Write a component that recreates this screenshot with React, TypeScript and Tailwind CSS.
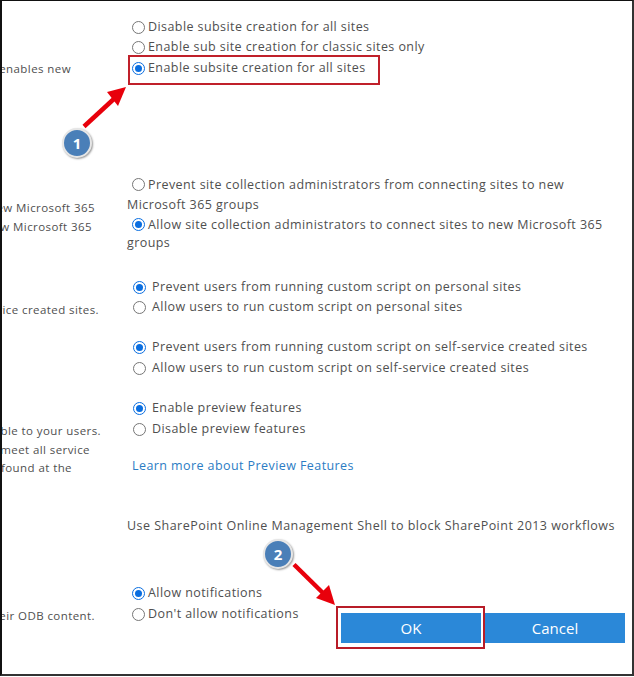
const Radio = ({ on }: { on?: boolean }) => (
  <span className={`inline-block shrink-0 w-[13px] h-[13px] rounded-full border bg-white ${on ? "border-[#0a6ee0] p-[2px]" : "border-[#767676]"}`}>
    {on && <span className="block w-full h-full rounded-full bg-[#0a6ee0]" />}
  </span>
);

const Opt = ({ on, children, wide, h = "h-5" }: { on?: boolean; children: React.ReactNode; wide?: boolean; h?: string }) => (
  <div className={`flex items-center ${h} ${wide ? "pl-[6px] gap-[6px]" : "pl-[5px] gap-[3px]"} whitespace-nowrap`}>
    <Radio on={on} />
    <span>{children}</span>
  </div>
);

const Clip = ({ w, h = "h-[19px]", children }: { w: string; h?: string; children: React.ReactNode }) => (
  <div className={`${w} ${h} leading-[19px] overflow-hidden flex justify-end whitespace-nowrap`}>
    <span className="shrink-0">{children}</span>
  </div>
);

export default function App() {
  return (
    <div className="relative w-[634px] h-[677px] bg-white overflow-hidden text-[#4f4f4f] text-[12.5px] tracking-[0.42px] font-['Open_Sans','Noto_Sans',sans-serif]">
      <div className="w-[634px] h-[676px] border-t border-l-2 border-r-2 border-b-2 border-t-[#111] border-l-[#111] border-r-[#333] border-b-[#333] pt-[16px]">
        {/* Section 1 */}
        <div className="flex h-[157px]">
          <div className="w-[125px] shrink-0 pt-[42px] text-[11.5px]">
            <Clip w="w-[69px]">which enables new</Clip>
          </div>
          <div>
            <Opt>Disable subsite creation for all sites</Opt>
            <Opt h="h-[21px]">Enable sub site creation for classic sites only</Opt>
            <Opt on h="h-[21px]">Enable subsite creation for all sites</Opt>
          </div>
        </div>

        {/* Section 2 */}
        <div className="flex h-[93px]">
          <div className="w-[125px] shrink-0 pt-[24px] text-[11.5px]">
            <Clip w="w-[93px]">to new Microsoft 365</Clip>
            <Clip w="w-[90px]">to new Microsoft 365</Clip>
          </div>
          <div className="w-[490px] leading-[19px]">
            <Opt>Prevent site collection administrators from connecting sites to new</Opt>
            <div className="h-5 leading-[21px]">Microsoft 365 groups</div>
            <Opt on>Allow site collection administrators to connect sites to new Microsoft 365</Opt>
            <div className="h-5 leading-[18px]">groups</div>
          </div>
        </div>

        {/* Section 3 */}
        <div className="flex h-[60px] pt-[10px]">
          <div className="w-[125px] shrink-0 pt-[23px] text-[11.5px]">
            <Clip w="w-[97px]">self-service created sites.</Clip>
          </div>
          <div>
            <Opt wide on>Prevent users from running custom script on personal sites</Opt>
            <Opt wide>Allow users to run custom script on personal sites</Opt>
          </div>
        </div>

        {/* Section 4 */}
        <div className="flex h-[61px] pl-[125px] pt-[10px]">
          <div>
            <Opt wide on h="h-[21px]">Prevent users from running custom script on self-service created sites</Opt>
            <Opt wide>Allow users to run custom script on self-service created sites</Opt>
          </div>
        </div>

        {/* Section 5 */}
        <div className="flex h-[90px] pt-[10px]">
          <div className="w-[125px] shrink-0 pt-[23px] text-[11.5px]">
            <Clip w="w-[99px]">available to your users.</Clip>
            <Clip w="w-[88px]" h="h-[18px]">may not meet all service</Clip>
            <Clip w="w-[70px]">can be found at the</Clip>
          </div>
          <div>
            <Opt wide on h="h-[21px]">Enable preview features</Opt>
            <Opt wide>Disable preview features</Opt>
            <a className="block mt-[18px] ml-[5px] text-[#2b7cc4]">Learn more about Preview Features</a>
          </div>
        </div>

        {/* Section 6 */}
        <div className="pl-[125px] pt-[38px] h-[105px] leading-5 tracking-[0.47px]">Use SharePoint Online Management Shell to block SharePoint 2013 workflows</div>

        {/* Section 7 */}
        <div className="flex">
          <div className="w-[125px] shrink-0 pt-[23px] text-[11.5px]">
            <Clip w="w-[93px]">to view their ODB content.</Clip>
          </div>
          <div>
            <Opt on h="h-[21px]">Allow notifications</Opt>
            <Opt>Don't allow notifications</Opt>
          </div>
          <div className="flex gap-[4px] absolute left-[341px] top-[613px] text-white text-[15px] tracking-normal">
            <button className="w-[140px] h-[30px] bg-[#2b88d8]">OK</button>
            <button className="w-[140px] h-[30px] bg-[#2b88d8]">Cancel</button>
          </div>
        </div>
      </div>

      {/* Annotations */}
      <div className="absolute left-[128px] top-[55px] w-[252px] h-[30px] border-2 border-[#c0202a]" />
      <div className="absolute left-[336px] top-[606px] w-[149px] h-[43px] border-2 border-[#b81c28]" />
      <svg className="absolute left-0 top-0" width="634" height="677" viewBox="0 0 634 677">
        <line x1="84" y1="126.5" x2="116" y2="97" stroke="#e8000b" strokeWidth="4.5" />
        <polygon points="126,87 118,106 107,92" fill="#e8000b" />
        <line x1="294" y1="564.5" x2="325" y2="595" stroke="#e8000b" strokeWidth="4.5" />
        <polygon points="335,605 316,598 329,585" fill="#e8000b" />
      </svg>
      <div className="absolute left-[62px] top-[128px] w-[30px] h-[30px] rounded-full bg-[#4a7fb8] border-2 border-[#e6e6e6] shadow-[1px_1px_2px_rgba(0,0,0,0.4)] flex items-center justify-center text-white text-[15px] font-bold tracking-normal">1</div>
      <div className="absolute left-[263px] top-[539px] w-[30px] h-[30px] rounded-full bg-[#4a7fb8] border-2 border-[#e6e6e6] shadow-[1px_1px_2px_rgba(0,0,0,0.4)] flex items-center justify-center text-white text-[15px] font-bold tracking-normal">2</div>
    </div>
  );
}
